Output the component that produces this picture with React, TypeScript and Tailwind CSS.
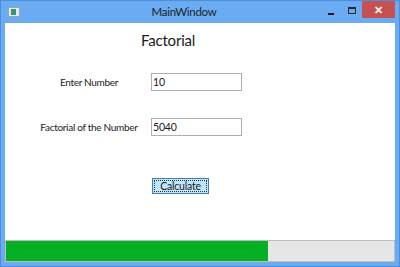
import React from "react";

export default function App() {
  const ui = { fontFamily: '"Lato", "Noto Sans", sans-serif' };
  return (
    <div
      className="w-[400px] h-[267px] bg-[#6aabf2] border border-[#4a8fdc] flex flex-col relative overflow-hidden"
      style={ui}
    >
      {/* Title bar */}
      <div className="h-[22px] flex items-center relative">
        <div className="ml-[7px] w-[12px] h-[10px] bg-[#e8e8e8] border border-[#9aa4ae] flex items-center pl-[2px]">
          <div className="w-[5px] h-[6px] bg-[#2f9a7a]" />
        </div>
        <div className="flex-1 text-center text-[11.5px] tracking-[-0.3px] text-[#1e1e1e] pl-[20px]">MainWindow</div>
        <div className="w-[6px] h-[2px] bg-[#1a1a1a] mt-[3px] mr-[14px]" />
        <div className="w-[8px] h-[7px] border border-[#2a2a2a] border-t-2 mb-[4px] mr-[6px]" />
        <div className="w-[33px] h-[18px] bg-[#c75050] self-start -mt-px mr-[4px] flex items-center justify-center text-white text-[11px] font-bold leading-none">
          ✕
        </div>
      </div>
      {/* Client area */}
      <div className="flex-1 mx-[4px] bg-white flex flex-col">
        <div className="pt-[6px] pl-[136px] h-[28px] text-[15px] tracking-[-0.2px] leading-[22px] text-[#1a1a1a]">Factorial</div>
        <div className="mt-[22px] flex items-center h-[18px]">
          <div className="w-[124px] ml-[22px] text-center text-[10px] tracking-[-0.3px] text-[#1a1a1a]">Enter Number</div>
          <div className="w-[91px] h-[18px] border border-[#abadb3] text-[10.5px] tracking-[-0.2px] leading-[16px] pl-[1px] text-[#1a1a1a]">10</div>
        </div>
        <div className="mt-[27px] flex items-center h-[18px]">
          <div className="w-[124px] ml-[22px] text-center text-[10px] tracking-[-0.3px] text-[#1a1a1a]">Factorial of the Number</div>
          <div className="w-[91px] h-[18px] border border-[#abadb3] text-[10.5px] tracking-[-0.2px] leading-[16px] pl-[1px] text-[#1a1a1a]">5040</div>
        </div>
        <div className="mt-[42px] pl-[147px]">
          <div className="w-[57px] h-[16px] bg-[#bee6fd] border border-[#3c7fb1] p-px">
            <div className="w-full h-full border border-dotted border-[#333] flex items-center justify-center text-[10.5px] tracking-[-0.2px] leading-none text-[#1a1a1a]">
              Calculate
            </div>
          </div>
        </div>
      </div>
      {/* Progress bar */}
      <div className="mx-[4px] h-[22px] bg-[#e6e6e6] border border-[#bcbcbc] flex">
        <div className="w-[262px] h-full bg-[#06b025]" />
      </div>
      <div className="h-[4px]" />
    </div>
  );
}
